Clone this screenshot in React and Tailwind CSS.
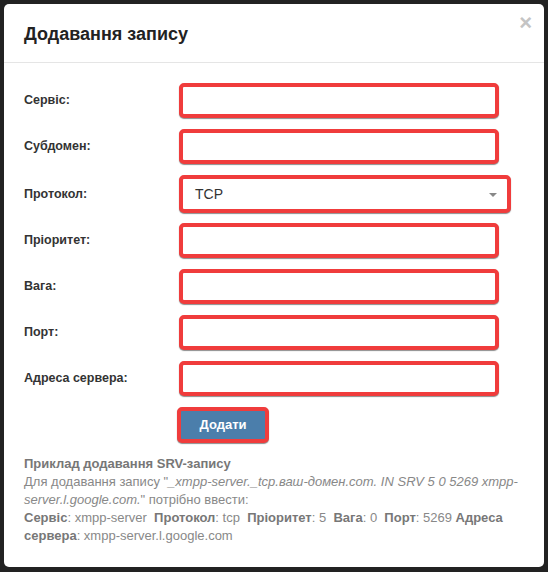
import React from "react";

const inputCls =
  "h-[35px] w-[320px] rounded-[5px] border-[4px] border-[#f03c3c] bg-white shadow-[0_1px_1px_rgba(0,0,0,0.45)]";

function Row({ label, children, className = "" }) {
  return (
    <div className={"flex items-center " + className}>
      <div className="w-[155px] shrink-0 text-[12.5px] font-bold text-[#333]">{label}</div>
      {children}
    </div>
  );
}

export default function App() {
  return (
    <div
      className="min-h-[572px] w-[548px] bg-[#222] p-[4px]"
      style={{ fontFamily: '"Liberation Sans", Arial, sans-serif' }}
    >
      <div className="relative h-[563px] w-[540px] rounded-[5px] bg-white">
        <div className="flex h-[59px] items-center border-b border-[#e5e5e5] px-[20px]">
          <h4 className="text-[18px] font-bold leading-[28px] text-[#222] mt-[1px]">Додавання запису</h4>
        </div>
        <div className="absolute right-[12px] top-[5px] text-[22px] font-bold leading-[28px] text-[#c4c4c4]">
          ×
        </div>
        <div className="px-[20px] pt-[20px]">
          <div className="flex flex-col">
            <Row label="Сервіс:" className="mb-[11px]">
              <div className={inputCls}></div>
            </Row>
            <Row label="Субдомен:" className="mb-[11px]">
              <div className={inputCls}></div>
            </Row>
            <Row label="Протокол:" className="mb-[10px]">
              <div className="relative flex h-[38px] w-[332px] items-center rounded-[5px] border-[4px] border-[#f03c3c] bg-white pl-[12px] text-[14px] text-[#333] shadow-[0_1px_1px_rgba(0,0,0,0.45)]">
                TCP
                <span className="absolute right-[10px] top-[14px] h-0 w-0 border-x-[4px] border-t-[4px] border-x-transparent border-t-[#888]"></span>
              </div>
            </Row>
            <Row label="Пріоритет:" className="mb-[11px]">
              <div className={inputCls}></div>
            </Row>
            <Row label="Вага:" className="mb-[11px]">
              <div className={inputCls}></div>
            </Row>
            <Row label="Порт:" className="mb-[11px]">
              <div className={inputCls}></div>
            </Row>
            <Row label="Адреса сервера:" className="mb-[11px]">
              <div className={inputCls}></div>
            </Row>
            <div className="flex">
              <div className="w-[153px] shrink-0"></div>
              <button className="flex h-[36px] w-[92px] items-center justify-center rounded-[5px] border-[4px] border-[#f03c3c] bg-[#4b7eab] text-[13px] font-bold text-white shadow-[0_1px_1px_rgba(0,0,0,0.45)]">
                Додати
              </button>
            </div>
          </div>
          <div className="mt-[12px] text-[13px] leading-[18px] text-[#888]">
            <div className="font-bold text-[#777]">Приклад додавання SRV-запису</div>
            <div>
              Для додавання запису "<i>_xmpp-server._tcp.ваш-домен.com. IN SRV 5 0 5269 xmpp-server.l.google.com.</i>" потрібно ввести:
            </div>
            <div>
              <b className="text-[#777]">Сервіс</b>: xmpp-server&nbsp; <b className="text-[#777]">Протокол</b>: tcp&nbsp; <b className="text-[#777]">Пріоритет</b>: 5&nbsp; <b className="text-[#777]">Вага</b>: 0&nbsp; <b className="text-[#777]">Порт</b>: 5269 <b className="text-[#777]">Адреса сервера</b>: xmpp-server.l.google.com
            </div>
          </div>
        </div>
      </div>
    </div>
  );
}
